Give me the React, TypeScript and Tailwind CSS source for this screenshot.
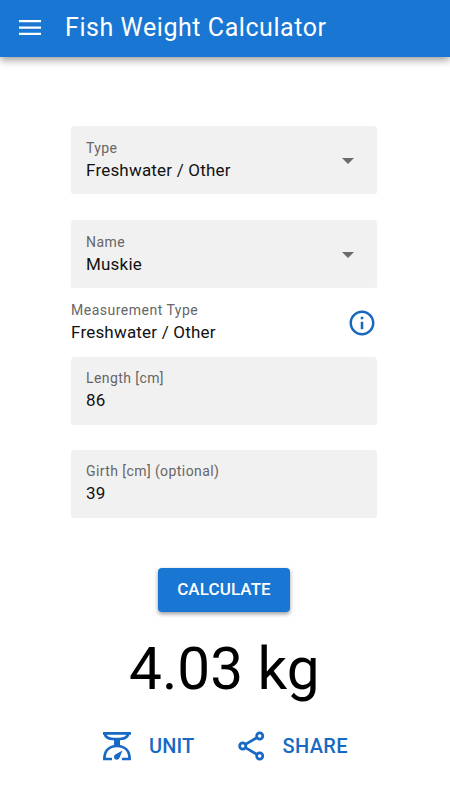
import React from "react";

function Field({ label, value, select, gap }: { label: string; value: string; select?: boolean; gap: string }) {
  return (
    <div className={`flex h-[68px] w-[305.5px] justify-between rounded-t-[4px] rounded-b-[2px] bg-[#f1f1f1] pl-[15px] pr-[23px] ${gap}`}>
      <div className={select ? "pt-[11px]" : "pt-[10px]"}>
        <div className="text-[14px] leading-[22px] tracking-[0.42px] text-[#666666]">{label}</div>
        <div className="text-[17px] leading-[23px] tracking-[0.2px] text-[#111111]">{value}</div>
      </div>
      {select && (
        <svg className="mt-[31.5px]" width="12" height="6" viewBox="0 0 12 6" fill="#6b6b6b"><path d="M0 0h12L6 6z" /></svg>
      )}
    </div>
  );
}

export default function App() {
  return (
    <div className="flex h-[800px] w-[450px] flex-col overflow-hidden bg-white font-['Roboto',sans-serif]">
      <header className="flex h-[57px] shrink-0 items-center bg-[#1976d2] pb-[2px] pl-[19px] text-white shadow-[0_3px_8px_rgba(0,0,0,0.4)]">
        <svg width="22" height="16" viewBox="0 0 22 16" fill="white"><path d="M0 0h22v2.3H0zM0 6.4h22v2.3H0zM0 12.8h22v2.3H0z" /></svg>
        <h1 className="ml-[24px] pt-px text-[25px] leading-[30px] tracking-[0.56px]">Fish Weight Calculator</h1>
      </header>
      <main className="flex flex-col pl-[71px]">
        <Field label="Type" value="Freshwater / Other" select gap="mt-[69px]" />
        <Field label="Name" value="Muskie" select gap="mt-[26px]" />
        <div className="mt-[11px] flex h-[58px] w-[306px] justify-between">
          <div>
            <div className="text-[14px] leading-[22px] tracking-[0.5px] text-[#666666]">Measurement Type</div>
            <div className="text-[17px] leading-[23px] tracking-[0.2px] text-[#111111]">Freshwater / Other</div>
          </div>
          <svg className="mt-[8.5px]" width="30" height="30" viewBox="0 0 24 24" fill="#1769c0"><path d="M11 7h2v2h-2zm0 4h2v6h-2zm1-9C6.480 2 2 6.480 2 12s4.480 10 10 10 10-4.480 10-10S17.520 2 12 2zm0 18c-4.410 0-8-3.590-8-8s3.590-8 8-8 8 3.590 8 8-3.590 8-8 8z" /></svg>
        </div>
        <Field label="Length [cm]" value="86" gap="" />
        <Field label="Girth [cm] (optional)" value="39" gap="mt-[25px]" />
      </main>
      <button className="ml-[158px] mt-[50px] h-[44px] w-[132px] shrink-0 rounded bg-[#1976d2] text-[17px] font-medium tracking-[0.1px] text-white shadow-[0_2px_4px_rgba(0,0,0,0.4)]">CALCULATE</button>
      <div className="ml-[129px] mt-[22px] text-[58.5px] leading-[70px] text-black">4.03 kg</div>
      <div className="mt-[26px] flex h-[32px] items-center pl-[102px] text-[20px] font-medium text-[#1769c4]">
        <svg width="30" height="30" viewBox="0 0 30 30" fill="none" stroke="#1769c4" strokeWidth="2.7"><path d="M1 2.400h28M2.500 2.400c1 4 5 5.600 9 5.600h6c4 0 8-1.600 9-5.600M10 28H2.400C2.400 20 7 15 15 15S27.600 20 27.600 28H20" /><path d="M12 8h6v7h-6zM20.500 19.500l-3 7.200a2.800 2.800 0 1 1-3.700-3.400z" fill="#1769c4" stroke="none" /></svg>
        <span className="ml-[17px] tracking-[0.15px]">UNIT</span>
        <svg className="ml-[43px]" width="28" height="30" viewBox="0 0 28 30" fill="none" stroke="#1769c4" strokeWidth="2.7"><circle cx="5.700" cy="15" r="3.100" /><circle cx="22.700" cy="5" r="3.100" /><circle cx="22.700" cy="25" r="3.100" /><path d="M8.400 13.400l11.600-6.800M8.400 16.600l11.600 6.800" /></svg>
        <span className="ml-[17px] tracking-[0.35px]">SHARE</span>
      </div>
    </div>
  );
}
